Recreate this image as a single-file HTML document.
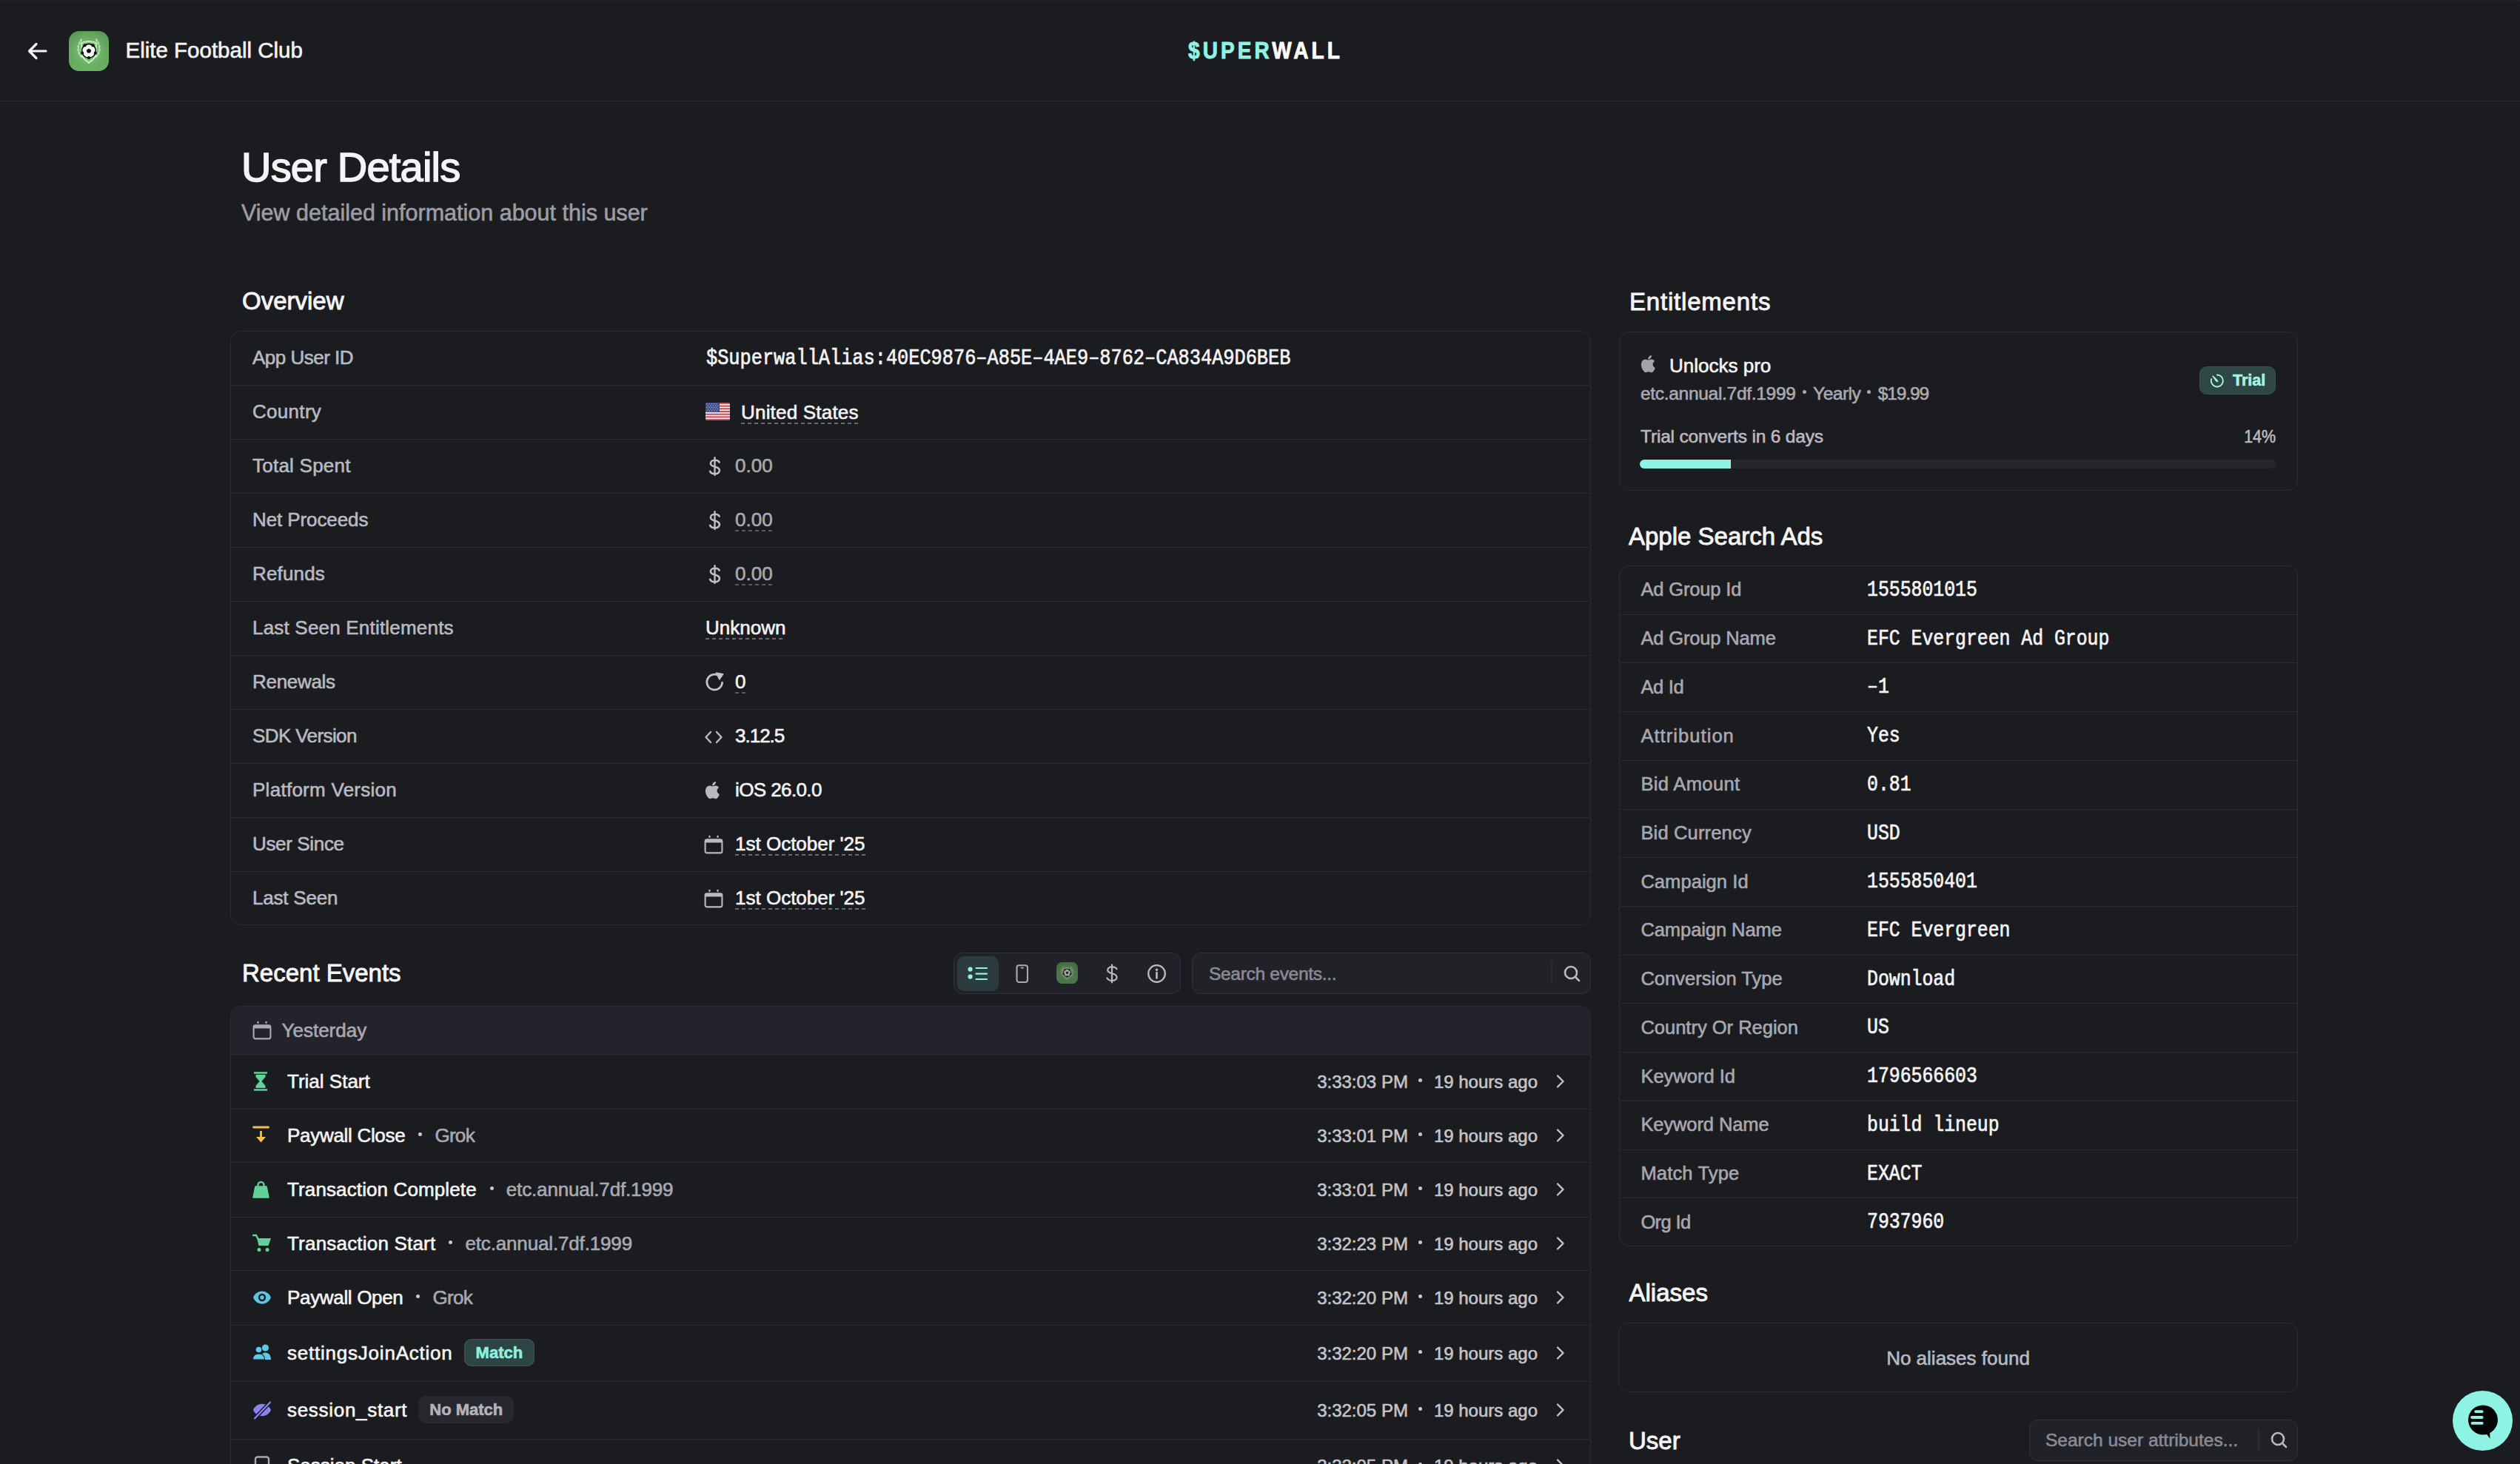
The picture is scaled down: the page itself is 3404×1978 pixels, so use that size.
<!DOCTYPE html><html><head><meta charset="utf-8"><title>User Details</title><style>
*{margin:0;padding:0;box-sizing:border-box}
html,body{width:3404px;height:1978px;overflow:hidden;background:#1b1c20;font-family:"Liberation Sans",sans-serif;}
.t{position:absolute;white-space:nowrap;line-height:1;-webkit-text-stroke:0.6px currentColor;}
.h{-webkit-text-stroke:0.9px currentColor;}
.h2{-webkit-text-stroke:1.5px currentColor;}
.m{font-family:"Liberation Mono",monospace;}
.r{position:absolute;}
svg{position:absolute;overflow:visible}
</style></head><body>
<div class="r" style="left:0px;top:0px;width:3404px;height:3px;background:linear-gradient(#23242a,#1b1c20)"></div>
<div class="r" style="left:0px;top:136px;width:3404px;height:1px;background:#2a2b30"></div>
<svg style="left:36px;top:56px" width="30" height="26" viewBox="0 0 30 26"><path d="M26 13H4M13 3.5L3.5 13L13 22.5" fill="none" stroke="#f4f4f6" stroke-width="3.2" stroke-linecap="round" stroke-linejoin="round"/></svg>
<svg style="left:93px;top:42px" width="54" height="54" viewBox="0 0 54 54"><defs><linearGradient id="gi93" x1="0" y1="0" x2="0" y2="1"><stop offset="0" stop-color="#5b9855"/><stop offset="0.5" stop-color="#64a85c"/><stop offset="1" stop-color="#68b05f"/></linearGradient><radialGradient id="gi93r" cx="0.5" cy="0.45" r="0.5"><stop offset="0" stop-color="#9bd893" stop-opacity="0.55"/><stop offset="1" stop-color="#9bd893" stop-opacity="0"/></radialGradient></defs><rect x="0" y="0" width="54" height="54" rx="14" fill="url(#gi93)"/><rect x="0" y="0" width="54" height="54" rx="14" fill="url(#gi93r)"/><path d="M17 16 Q27 11.5 37 16 L37 28 Q37 37 27 43 Q17 37 17 28 Z" fill="#b4e6ac" fill-opacity="0.3" stroke="#d2f7ca" stroke-width="1.5"/><ellipse cx="16.5" cy="12.5" rx="1.4" ry="2.3" transform="rotate(20 16.5 12.5)" fill="#c6efbf" fill-opacity="0.8"/><ellipse cx="37.5" cy="12.5" rx="1.4" ry="2.3" transform="rotate(-20 37.5 12.5)" fill="#c6efbf" fill-opacity="0.8"/><ellipse cx="14.2" cy="16.5" rx="1.4" ry="2.3" transform="rotate(10 14.2 16.5)" fill="#c6efbf" fill-opacity="0.8"/><ellipse cx="39.8" cy="16.5" rx="1.4" ry="2.3" transform="rotate(-10 39.8 16.5)" fill="#c6efbf" fill-opacity="0.8"/><ellipse cx="12.8" cy="21" rx="1.4" ry="2.3" transform="rotate(0 12.8 21)" fill="#c6efbf" fill-opacity="0.8"/><ellipse cx="41.2" cy="21" rx="1.4" ry="2.3" transform="rotate(0 41.2 21)" fill="#c6efbf" fill-opacity="0.8"/><ellipse cx="12.8" cy="25.5" rx="1.4" ry="2.3" transform="rotate(-10 12.8 25.5)" fill="#c6efbf" fill-opacity="0.8"/><ellipse cx="41.2" cy="25.5" rx="1.4" ry="2.3" transform="rotate(10 41.2 25.5)" fill="#c6efbf" fill-opacity="0.8"/><ellipse cx="14" cy="30" rx="1.4" ry="2.3" transform="rotate(-25 14 30)" fill="#c6efbf" fill-opacity="0.8"/><ellipse cx="40" cy="30" rx="1.4" ry="2.3" transform="rotate(25 40 30)" fill="#c6efbf" fill-opacity="0.8"/><ellipse cx="16.5" cy="34" rx="1.4" ry="2.3" transform="rotate(-40 16.5 34)" fill="#c6efbf" fill-opacity="0.8"/><ellipse cx="37.5" cy="34" rx="1.4" ry="2.3" transform="rotate(40 37.5 34)" fill="#c6efbf" fill-opacity="0.8"/><circle cx="27" cy="26.8" r="10.2" fill="#0d0d0d"/><circle cx="27" cy="26.8" r="8.6" fill="#f4f4f4"/><polygon points="27.00,23.40 23.77,25.75 25.00,29.55 29.00,29.55 30.23,25.75" fill="#0d0d0d"/><circle cx="21.53" cy="19.28" r="2.1" fill="#0d0d0d"/><circle cx="18.16" cy="29.67" r="2.1" fill="#0d0d0d"/><circle cx="27.00" cy="36.10" r="2.1" fill="#0d0d0d"/><circle cx="35.84" cy="29.67" r="2.1" fill="#0d0d0d"/><circle cx="32.47" cy="19.28" r="2.1" fill="#0d0d0d"/></svg>
<div class="t  " style="left:169.5px;top:53.03px;font-size:29.5px;color:#f4f4f6;">Elite Football Club</div>
<div class="t" style="left:1605px;top:52.76px;font-size:31px;font-weight:700;letter-spacing:4.6px;transform:scaleX(0.9);transform-origin:0 0;-webkit-text-stroke:0.9px currentColor"><span style="color:#8ff3e3">$UPER</span><span style="color:#ffffff">WALL</span></div>
<div class="t  h2" style="left:326px;top:197.90px;font-size:56px;color:#f4f4f6;letter-spacing:-0.8px;">User Details</div>
<div class="t  " style="left:326px;top:272.18px;font-size:30.5px;color:#9d9da6;">View detailed information about this user</div>
<div class="t  h" style="left:327px;top:390.07px;font-size:33px;color:#f4f4f6;">Overview</div>
<div class="r" style="left:311px;top:447px;width:1838px;height:803px;border:1.5px solid #2c2d33;border-radius:14px;"></div>
<div class="t  " style="left:341px;top:470.49px;font-size:26px;color:#b9b9c1;letter-spacing:-0.5px;">App User ID</div>
<div class="r" style="left:312px;top:520px;width:1836px;height:1px;background:#2b2c32"></div>
<div class="t  " style="left:341px;top:543.49px;font-size:26px;color:#b9b9c1;letter-spacing:0.3px;">Country</div>
<div class="r" style="left:312px;top:593px;width:1836px;height:1px;background:#2b2c32"></div>
<div class="t  " style="left:341px;top:616.49px;font-size:26px;color:#b9b9c1;letter-spacing:0.24px;">Total Spent</div>
<div class="r" style="left:312px;top:666px;width:1836px;height:1px;background:#2b2c32"></div>
<div class="t  " style="left:341px;top:689.49px;font-size:26px;color:#b9b9c1;letter-spacing:-0.1px;">Net Proceeds</div>
<div class="r" style="left:312px;top:739px;width:1836px;height:1px;background:#2b2c32"></div>
<div class="t  " style="left:341px;top:762.49px;font-size:26px;color:#b9b9c1;letter-spacing:0.17px;">Refunds</div>
<div class="r" style="left:312px;top:812px;width:1836px;height:1px;background:#2b2c32"></div>
<div class="t  " style="left:341px;top:835.49px;font-size:26px;color:#b9b9c1;letter-spacing:0.2px;">Last Seen Entitlements</div>
<div class="r" style="left:312px;top:885px;width:1836px;height:1px;background:#2b2c32"></div>
<div class="t  " style="left:341px;top:908.49px;font-size:26px;color:#b9b9c1;letter-spacing:-0.3px;">Renewals</div>
<div class="r" style="left:312px;top:958px;width:1836px;height:1px;background:#2b2c32"></div>
<div class="t  " style="left:341px;top:981.49px;font-size:26px;color:#b9b9c1;letter-spacing:-0.6px;">SDK Version</div>
<div class="r" style="left:312px;top:1031px;width:1836px;height:1px;background:#2b2c32"></div>
<div class="t  " style="left:341px;top:1054.49px;font-size:26px;color:#b9b9c1;letter-spacing:0.27px;">Platform Version</div>
<div class="r" style="left:312px;top:1104px;width:1836px;height:1px;background:#2b2c32"></div>
<div class="t  " style="left:341px;top:1127.49px;font-size:26px;color:#b9b9c1;letter-spacing:-0.35px;">User Since</div>
<div class="r" style="left:312px;top:1177px;width:1836px;height:1px;background:#2b2c32"></div>
<div class="t  " style="left:341px;top:1200.49px;font-size:26px;color:#b9b9c1;letter-spacing:-0.2px;">Last Seen</div>
<div class="t m " style="left:954px;top:473.12px;font-size:25.3px;color:#f4f4f6;transform:scaleY(1.18);transform-origin:0 76%;">$SuperwallAlias:40EC9876&#8211;A85E&#8211;4AE9&#8211;8762&#8211;CA834A9D6BEB</div>
<svg style="left:953px;top:544px" width="33" height="24" viewBox="0 0 33 24"><defs><clipPath id="fc"><rect width="33" height="24" rx="3.5"/></clipPath></defs><g clip-path="url(#fc)"><rect width="33" height="24" fill="#f0eeee"/><rect y="0.00" width="33" height="1.85" fill="#c1454d"/><rect y="3.69" width="33" height="1.85" fill="#c1454d"/><rect y="7.38" width="33" height="1.85" fill="#c1454d"/><rect y="11.08" width="33" height="1.85" fill="#c1454d"/><rect y="14.77" width="33" height="1.85" fill="#c1454d"/><rect y="18.46" width="33" height="1.85" fill="#c1454d"/><rect y="22.15" width="33" height="1.85" fill="#c1454d"/><rect width="19" height="12.9" fill="#3f4f8f"/><circle cx="2.0" cy="1.8" r="0.55" fill="#dfe3f5"/><circle cx="5.2" cy="1.8" r="0.55" fill="#dfe3f5"/><circle cx="8.4" cy="1.8" r="0.55" fill="#dfe3f5"/><circle cx="11.6" cy="1.8" r="0.55" fill="#dfe3f5"/><circle cx="14.8" cy="1.8" r="0.55" fill="#dfe3f5"/><circle cx="3.6" cy="4.1" r="0.55" fill="#dfe3f5"/><circle cx="6.8" cy="4.1" r="0.55" fill="#dfe3f5"/><circle cx="10.0" cy="4.1" r="0.55" fill="#dfe3f5"/><circle cx="13.2" cy="4.1" r="0.55" fill="#dfe3f5"/><circle cx="16.4" cy="4.1" r="0.55" fill="#dfe3f5"/><circle cx="2.0" cy="6.4" r="0.55" fill="#dfe3f5"/><circle cx="5.2" cy="6.4" r="0.55" fill="#dfe3f5"/><circle cx="8.4" cy="6.4" r="0.55" fill="#dfe3f5"/><circle cx="11.6" cy="6.4" r="0.55" fill="#dfe3f5"/><circle cx="14.8" cy="6.4" r="0.55" fill="#dfe3f5"/><circle cx="3.6" cy="8.7" r="0.55" fill="#dfe3f5"/><circle cx="6.8" cy="8.7" r="0.55" fill="#dfe3f5"/><circle cx="10.0" cy="8.7" r="0.55" fill="#dfe3f5"/><circle cx="13.2" cy="8.7" r="0.55" fill="#dfe3f5"/><circle cx="16.4" cy="8.7" r="0.55" fill="#dfe3f5"/><circle cx="2.0" cy="11.0" r="0.55" fill="#dfe3f5"/><circle cx="5.2" cy="11.0" r="0.55" fill="#dfe3f5"/><circle cx="8.4" cy="11.0" r="0.55" fill="#dfe3f5"/><circle cx="11.6" cy="11.0" r="0.55" fill="#dfe3f5"/><circle cx="14.8" cy="11.0" r="0.55" fill="#dfe3f5"/></g></svg>
<div class="t  " style="left:1001px;top:543.99px;font-size:26px;color:#f4f4f6;"><span style="background:linear-gradient(90deg,#6a6a72 0 5.5px,transparent 5.5px 9px) repeat-x 0 100%/9px 2px;padding-bottom:1px;letter-spacing:0.2px">United States</span></div>
<svg style="left:956px;top:617px" width="19" height="28" viewBox="0 0 19 28"><path d="M9.5 1.2v23.8" stroke="#c0c0c8" stroke-width="2.3" stroke-linecap="round"/><path d="M15.6 7.6C14.8 5.6 12.6 4.7 9.7 4.7C6.2 4.7 3.9 6.6 3.9 9.2C3.9 15 15.9 12.2 15.9 18.6C15.9 21.4 13.4 23.3 9.6 23.3C6.4 23.3 4 22 3.1 19.8" fill="none" stroke="#c0c0c8" stroke-width="2.6" stroke-linecap="round"/></svg>
<div class="t  " style="left:993px;top:616.49px;font-size:26px;color:#a9a9b1;">0.00</div>
<svg style="left:956px;top:690px" width="19" height="28" viewBox="0 0 19 28"><path d="M9.5 1.2v23.8" stroke="#c0c0c8" stroke-width="2.3" stroke-linecap="round"/><path d="M15.6 7.6C14.8 5.6 12.6 4.7 9.7 4.7C6.2 4.7 3.9 6.6 3.9 9.2C3.9 15 15.9 12.2 15.9 18.6C15.9 21.4 13.4 23.3 9.6 23.3C6.4 23.3 4 22 3.1 19.8" fill="none" stroke="#c0c0c8" stroke-width="2.6" stroke-linecap="round"/></svg>
<div class="t  " style="left:993px;top:689.49px;font-size:26px;color:#a9a9b1;"><span style="background:linear-gradient(90deg,#5a5a62 0 5.5px,transparent 5.5px 9px) repeat-x 0 100%/9px 2px;padding-bottom:1px">0.00</span></div>
<svg style="left:956px;top:763px" width="19" height="28" viewBox="0 0 19 28"><path d="M9.5 1.2v23.8" stroke="#c0c0c8" stroke-width="2.3" stroke-linecap="round"/><path d="M15.6 7.6C14.8 5.6 12.6 4.7 9.7 4.7C6.2 4.7 3.9 6.6 3.9 9.2C3.9 15 15.9 12.2 15.9 18.6C15.9 21.4 13.4 23.3 9.6 23.3C6.4 23.3 4 22 3.1 19.8" fill="none" stroke="#c0c0c8" stroke-width="2.6" stroke-linecap="round"/></svg>
<div class="t  " style="left:993px;top:762.49px;font-size:26px;color:#a9a9b1;"><span style="background:linear-gradient(90deg,#5a5a62 0 5.5px,transparent 5.5px 9px) repeat-x 0 100%/9px 2px;padding-bottom:1px">0.00</span></div>
<div class="t  " style="left:953px;top:835.49px;font-size:26px;color:#f4f4f6;"><span style="background:linear-gradient(90deg,#6a6a72 0 5.5px,transparent 5.5px 9px) repeat-x 0 100%/9px 2px;padding-bottom:1px">Unknown</span></div>
<svg style="left:951px;top:906px" width="30" height="30" viewBox="0 0 30 30"><path d="M24.6 16.2A10.4 10.4 0 1 1 19.2 6.4" fill="none" stroke="#c4c4cb" stroke-width="2.7" stroke-linecap="round"/><path d="M16.2 2.8L26.2 4.6L20.8 12.6Z" fill="#c4c4cb" stroke="#c4c4cb" stroke-width="1" stroke-linejoin="round"/></svg>
<div class="t  " style="left:993px;top:908.49px;font-size:26px;color:#f4f4f6;"><span style="background:linear-gradient(90deg,#5a5a62 0 5.5px,transparent 5.5px 9px) repeat-x 0 100%/9px 2px;padding-bottom:1px">0</span></div>
<svg style="left:951px;top:985px" width="26" height="22" viewBox="0 0 26 22"><path d="M9 4L2.5 11L9 18M17 4L23.5 11L17 18" fill="none" stroke="#b9b9c1" stroke-width="2.4" stroke-linecap="round" stroke-linejoin="round"/></svg>
<div class="t  " style="left:993px;top:981.49px;font-size:26px;color:#f4f4f6;letter-spacing:-1.0px;">3.12.5</div>
<svg style="left:951px;top:1055px" width="24" height="26" viewBox="0 0 24 26"><path d="M17.6 13.3c0-2.9 2.4-4.3 2.5-4.4-1.4-2-3.5-2.3-4.2-2.3-1.8-.2-3.5 1-4.4 1-.9 0-2.3-1-3.8-1-2 0-3.8 1.2-4.8 2.9-2.1 3.6-.5 8.9 1.5 11.8 1 1.4 2.2 3 3.7 3 1.5-.1 2-1 3.8-1s2.3 1 3.8 1c1.6 0 2.6-1.4 3.6-2.9 1.1-1.6 1.6-3.2 1.6-3.3-.1 0-3.3-1.2-3.3-4.8zM14.7 4.7c.8-1 1.4-2.3 1.2-3.7-1.2.1-2.6.8-3.5 1.8-.8.9-1.4 2.3-1.3 3.6 1.4.1 2.7-.7 3.6-1.7z" fill="#b9b9c1"/></svg>
<div class="t  " style="left:993px;top:1054.49px;font-size:26px;color:#f4f4f6;letter-spacing:-0.6px;">iOS 26.0.0</div>
<svg style="left:951px;top:1128px" width="26" height="26" viewBox="0 0 26 26"><rect x="1.6" y="6.4" width="22.8" height="18" rx="2.4" fill="none" stroke="#b9b9c1" stroke-width="2.1"/><rect x="1.6" y="6.4" width="22.8" height="4" rx="1.2" fill="#b9b9c1"/><rect x="6.3" y="0.8" width="2.3" height="3.3" rx="1.15" fill="#b9b9c1"/><rect x="17.4" y="0.8" width="2.3" height="3.3" rx="1.15" fill="#b9b9c1"/></svg>
<div class="t  " style="left:993px;top:1127.49px;font-size:26px;color:#f4f4f6;"><span style="background:linear-gradient(90deg,#6a6a72 0 5.5px,transparent 5.5px 9px) repeat-x 0 100%/9px 2px;padding-bottom:1px">1st October '25</span></div>
<svg style="left:951px;top:1201px" width="26" height="26" viewBox="0 0 26 26"><rect x="1.6" y="6.4" width="22.8" height="18" rx="2.4" fill="none" stroke="#b9b9c1" stroke-width="2.1"/><rect x="1.6" y="6.4" width="22.8" height="4" rx="1.2" fill="#b9b9c1"/><rect x="6.3" y="0.8" width="2.3" height="3.3" rx="1.15" fill="#b9b9c1"/><rect x="17.4" y="0.8" width="2.3" height="3.3" rx="1.15" fill="#b9b9c1"/></svg>
<div class="t  " style="left:993px;top:1200.49px;font-size:26px;color:#f4f4f6;"><span style="background:linear-gradient(90deg,#6a6a72 0 5.5px,transparent 5.5px 9px) repeat-x 0 100%/9px 2px;padding-bottom:1px">1st October '25</span></div>
<div class="t  h" style="left:327px;top:1298.07px;font-size:33px;color:#f4f4f6;">Recent Events</div>
<div class="r" style="left:1288px;top:1287px;width:307px;height:56px;background:#212228;border:1.5px solid #32333a;border-radius:12px;"></div>
<div class="r" style="left:1293px;top:1292px;width:56px;height:47px;background:#2b3b3e;border-radius:9px;"></div>
<svg style="left:1304px;top:1303px" width="32" height="26" viewBox="0 0 32 26"><circle cx="6.6" cy="6.6" r="3.1" fill="#8ff3e3"/><circle cx="6.6" cy="16.6" r="3.1" fill="#8ff3e3"/><path d="M14.5 5h14.5M14.5 12.6h14.5M14.5 20h14.5" stroke="#8ff3e3" stroke-width="2.2" stroke-linecap="round"/></svg>
<svg style="left:1372px;top:1303px" width="18" height="26" viewBox="0 0 18 26"><rect x="1.5" y="1.2" width="14.5" height="22.8" rx="3" fill="none" stroke="#a9a9b1" stroke-width="2.1"/><path d="M7.3 4.6h3" stroke="#a9a9b1" stroke-width="1.6" stroke-linecap="round"/></svg>
<svg style="left:1427px;top:1300px" width="29" height="29" viewBox="0 0 54 54" opacity="0.6"><defs><linearGradient id="gi1427" x1="0" y1="0" x2="0" y2="1"><stop offset="0" stop-color="#5b9855"/><stop offset="0.5" stop-color="#64a85c"/><stop offset="1" stop-color="#68b05f"/></linearGradient><radialGradient id="gi1427r" cx="0.5" cy="0.45" r="0.5"><stop offset="0" stop-color="#9bd893" stop-opacity="0.55"/><stop offset="1" stop-color="#9bd893" stop-opacity="0"/></radialGradient></defs><rect x="0" y="0" width="54" height="54" rx="14" fill="url(#gi1427)"/><rect x="0" y="0" width="54" height="54" rx="14" fill="url(#gi1427r)"/><path d="M17 16 Q27 11.5 37 16 L37 28 Q37 37 27 43 Q17 37 17 28 Z" fill="#b4e6ac" fill-opacity="0.3" stroke="#d2f7ca" stroke-width="1.5"/><ellipse cx="16.5" cy="12.5" rx="1.4" ry="2.3" transform="rotate(20 16.5 12.5)" fill="#c6efbf" fill-opacity="0.8"/><ellipse cx="37.5" cy="12.5" rx="1.4" ry="2.3" transform="rotate(-20 37.5 12.5)" fill="#c6efbf" fill-opacity="0.8"/><ellipse cx="14.2" cy="16.5" rx="1.4" ry="2.3" transform="rotate(10 14.2 16.5)" fill="#c6efbf" fill-opacity="0.8"/><ellipse cx="39.8" cy="16.5" rx="1.4" ry="2.3" transform="rotate(-10 39.8 16.5)" fill="#c6efbf" fill-opacity="0.8"/><ellipse cx="12.8" cy="21" rx="1.4" ry="2.3" transform="rotate(0 12.8 21)" fill="#c6efbf" fill-opacity="0.8"/><ellipse cx="41.2" cy="21" rx="1.4" ry="2.3" transform="rotate(0 41.2 21)" fill="#c6efbf" fill-opacity="0.8"/><ellipse cx="12.8" cy="25.5" rx="1.4" ry="2.3" transform="rotate(-10 12.8 25.5)" fill="#c6efbf" fill-opacity="0.8"/><ellipse cx="41.2" cy="25.5" rx="1.4" ry="2.3" transform="rotate(10 41.2 25.5)" fill="#c6efbf" fill-opacity="0.8"/><ellipse cx="14" cy="30" rx="1.4" ry="2.3" transform="rotate(-25 14 30)" fill="#c6efbf" fill-opacity="0.8"/><ellipse cx="40" cy="30" rx="1.4" ry="2.3" transform="rotate(25 40 30)" fill="#c6efbf" fill-opacity="0.8"/><ellipse cx="16.5" cy="34" rx="1.4" ry="2.3" transform="rotate(-40 16.5 34)" fill="#c6efbf" fill-opacity="0.8"/><ellipse cx="37.5" cy="34" rx="1.4" ry="2.3" transform="rotate(40 37.5 34)" fill="#c6efbf" fill-opacity="0.8"/><circle cx="27" cy="26.8" r="10.2" fill="#0d0d0d"/><circle cx="27" cy="26.8" r="8.6" fill="#f4f4f4"/><polygon points="27.00,23.40 23.77,25.75 25.00,29.55 29.00,29.55 30.23,25.75" fill="#0d0d0d"/><circle cx="21.53" cy="19.28" r="2.1" fill="#0d0d0d"/><circle cx="18.16" cy="29.67" r="2.1" fill="#0d0d0d"/><circle cx="27.00" cy="36.10" r="2.1" fill="#0d0d0d"/><circle cx="35.84" cy="29.67" r="2.1" fill="#0d0d0d"/><circle cx="32.47" cy="19.28" r="2.1" fill="#0d0d0d"/></svg>
<svg style="left:1492px;top:1302px" width="20" height="27" viewBox="0 0 20 27"><path d="M10 1.5v24" stroke="#b9b9c1" stroke-width="2.2" stroke-linecap="round"/><path d="M16.5 7.2C15.6 5.3 13.3 4.3 10.3 4.3C6.6 4.3 4.2 6.2 4.2 8.8C4.2 14.6 16.6 11.8 16.6 18.2C16.6 21 14 22.9 10.1 22.9C6.8 22.9 4.4 21.6 3.4 19.4" fill="none" stroke="#b9b9c1" stroke-width="2.2" stroke-linecap="round"/></svg>
<svg style="left:1549px;top:1302px" width="28" height="28" viewBox="0 0 28 28"><circle cx="13.5" cy="13.5" r="11.3" fill="none" stroke="#b9b9c1" stroke-width="2.3"/><circle cx="13.5" cy="8.3" r="1.7" fill="#b9b9c1"/><path d="M13.5 12v7.5" stroke="#b9b9c1" stroke-width="2.7" stroke-linecap="round"/></svg>
<div class="r" style="left:1610px;top:1287px;width:539px;height:56px;background:#212228;border:1.5px solid #32333a;border-radius:12px;"></div>
<div class="t  " style="left:1633px;top:1304.26px;font-size:24.5px;color:#8a8a93;letter-spacing:-0.3px;">Search events...</div>
<div class="r" style="left:2095px;top:1300px;width:2px;height:30px;background:#2c2d33"></div>
<svg style="left:2112px;top:1304px" width="22" height="22" viewBox="0 0 22 22"><circle cx="10" cy="10" r="8" fill="none" stroke="#b9b9c1" stroke-width="2.6"/><path d="M16 16l5 5" stroke="#b9b9c1" stroke-width="2.6" stroke-linecap="round"/></svg>
<div class="r" style="left:311px;top:1359px;width:1838px;height:741px;border:1.5px solid #2c2d33;border-radius:14px;"></div>
<div class="r" style="left:312px;top:1360px;width:1836px;height:64px;background:#23242b;border-radius:13px 13px 0 0;"></div>
<div class="r" style="left:312px;top:1424px;width:1836px;height:1px;background:#2b2c32"></div>
<svg style="left:341px;top:1379px" width="26" height="26" viewBox="0 0 26 26"><rect x="1.6" y="6.4" width="22.8" height="18" rx="2.4" fill="none" stroke="#a9a9b1" stroke-width="2.1"/><rect x="1.6" y="6.4" width="22.8" height="4" rx="1.2" fill="#a9a9b1"/><rect x="6.3" y="0.8" width="2.3" height="3.3" rx="1.15" fill="#a9a9b1"/><rect x="17.4" y="0.8" width="2.3" height="3.3" rx="1.15" fill="#a9a9b1"/></svg>
<div class="t  " style="left:380.5px;top:1378.99px;font-size:26px;color:#a9a9b1;">Yesterday</div>
<svg style="left:341px;top:1448.0px" width="26" height="26" viewBox="0 0 26 26"><path d="M2 1.5h18M2 24.5h18" stroke="#62d09b" stroke-width="2.6"/><path d="M4.5 4h13v3l-5 6 5 6v3h-13v-3l5-6-5-6z" fill="#62d09b"/></svg>
<div class="t  " style="left:388px;top:1447.99px;font-size:26px;color:#f4f4f6;"><span style="letter-spacing:0px">Trial Start</span></div>
<div class="t" style="right:1327px;top:1449.68px;font-size:24px;color:#c4c4cb">3:33:03 PM<span style="display:inline-block;width:5px;height:5px;border-radius:50%;background:#c9c9d0;margin:0 15.5px 0 14.5px;vertical-align:0.3em"></span>19 hours ago</div>
<svg style="left:2101px;top:1451.0px" width="14" height="20" viewBox="0 0 14 20"><path d="M3 2.5L10.5 10L3 17.5" fill="none" stroke="#c4c4cb" stroke-width="2.4" stroke-linecap="round" stroke-linejoin="round"/></svg>
<div class="r" style="left:312px;top:1498px;width:1836px;height:1px;background:#2b2c32"></div>
<svg style="left:341px;top:1521.0px" width="26" height="26" viewBox="0 0 26 26"><path d="M1.5 2h20" stroke="#f3bf4b" stroke-width="2.8" stroke-linecap="round"/><path d="M11.5 7v14" stroke="#f3bf4b" stroke-width="2.8"/><path d="M5 15l6.5 7.5L18 15z" fill="#f3bf4b"/></svg>
<div class="t  " style="left:388px;top:1520.99px;font-size:26px;color:#f4f4f6;"><span style="letter-spacing:-0.3px">Paywall Close</span><span style="display:inline-block;width:5px;height:5px;border-radius:50%;background:#c9c9d0;margin:0 17px 0 18px;vertical-align:0.3em"></span><span style="color:#a9a9b1;letter-spacing:-0.7px">Grok</span></div>
<div class="t" style="right:1327px;top:1522.68px;font-size:24px;color:#c4c4cb">3:33:01 PM<span style="display:inline-block;width:5px;height:5px;border-radius:50%;background:#c9c9d0;margin:0 15.5px 0 14.5px;vertical-align:0.3em"></span>19 hours ago</div>
<svg style="left:2101px;top:1524.0px" width="14" height="20" viewBox="0 0 14 20"><path d="M3 2.5L10.5 10L3 17.5" fill="none" stroke="#c4c4cb" stroke-width="2.4" stroke-linecap="round" stroke-linejoin="round"/></svg>
<div class="r" style="left:312px;top:1570px;width:1836px;height:1px;background:#2b2c32"></div>
<svg style="left:341px;top:1594.0px" width="26" height="26" viewBox="0 0 26 26"><path d="M7.5 9V7a4 4 0 0 1 8 0v2" fill="none" stroke="#62d09b" stroke-width="2.4"/><path d="M4 9h15l3 15H1z" fill="#62d09b" stroke="#62d09b" stroke-width="1.5" stroke-linejoin="round"/></svg>
<div class="t  " style="left:388px;top:1593.99px;font-size:26px;color:#f4f4f6;"><span style="letter-spacing:0.12px">Transaction Complete</span><span style="display:inline-block;width:5px;height:5px;border-radius:50%;background:#c9c9d0;margin:0 17px 0 18px;vertical-align:0.3em"></span><span style="color:#a9a9b1;letter-spacing:-0.15px">etc.annual.7df.1999</span></div>
<div class="t" style="right:1327px;top:1595.68px;font-size:24px;color:#c4c4cb">3:33:01 PM<span style="display:inline-block;width:5px;height:5px;border-radius:50%;background:#c9c9d0;margin:0 15.5px 0 14.5px;vertical-align:0.3em"></span>19 hours ago</div>
<svg style="left:2101px;top:1597.0px" width="14" height="20" viewBox="0 0 14 20"><path d="M3 2.5L10.5 10L3 17.5" fill="none" stroke="#c4c4cb" stroke-width="2.4" stroke-linecap="round" stroke-linejoin="round"/></svg>
<div class="r" style="left:312px;top:1644px;width:1836px;height:1px;background:#2b2c32"></div>
<svg style="left:341px;top:1667.0px" width="26" height="26" viewBox="0 0 26 26"><path d="M1 2h4l2 4" fill="none" stroke="#62d09b" stroke-width="2.4" stroke-linecap="round"/><path d="M6 6h19l-3.5 10H8.5z" fill="#62d09b"/><circle cx="9" cy="21.5" r="2.5" fill="#62d09b"/><circle cx="20" cy="21.5" r="2.5" fill="#62d09b"/></svg>
<div class="t  " style="left:388px;top:1666.99px;font-size:26px;color:#f4f4f6;"><span style="letter-spacing:0.2px">Transaction Start</span><span style="display:inline-block;width:5px;height:5px;border-radius:50%;background:#c9c9d0;margin:0 17px 0 18px;vertical-align:0.3em"></span><span style="color:#a9a9b1;letter-spacing:-0.15px">etc.annual.7df.1999</span></div>
<div class="t" style="right:1327px;top:1668.68px;font-size:24px;color:#c4c4cb">3:32:23 PM<span style="display:inline-block;width:5px;height:5px;border-radius:50%;background:#c9c9d0;margin:0 15.5px 0 14.5px;vertical-align:0.3em"></span>19 hours ago</div>
<svg style="left:2101px;top:1670.0px" width="14" height="20" viewBox="0 0 14 20"><path d="M3 2.5L10.5 10L3 17.5" fill="none" stroke="#c4c4cb" stroke-width="2.4" stroke-linecap="round" stroke-linejoin="round"/></svg>
<div class="r" style="left:312px;top:1716px;width:1836px;height:1px;background:#2b2c32"></div>
<svg style="left:341px;top:1740.0px" width="26" height="26" viewBox="0 0 26 26"><path d="M1 13C5.5 1.5 20.5 1.5 25 13C20.5 24.5 5.5 24.5 1 13z" fill="#5fc3e3"/><circle cx="13" cy="13" r="5.2" fill="#1b1c20"/><circle cx="13" cy="13" r="2.7" fill="#5fc3e3"/></svg>
<div class="t  " style="left:388px;top:1739.99px;font-size:26px;color:#f4f4f6;"><span style="letter-spacing:-0.33px">Paywall Open</span><span style="display:inline-block;width:5px;height:5px;border-radius:50%;background:#c9c9d0;margin:0 17px 0 18px;vertical-align:0.3em"></span><span style="color:#a9a9b1;letter-spacing:-0.7px">Grok</span></div>
<div class="t" style="right:1327px;top:1741.68px;font-size:24px;color:#c4c4cb">3:32:20 PM<span style="display:inline-block;width:5px;height:5px;border-radius:50%;background:#c9c9d0;margin:0 15.5px 0 14.5px;vertical-align:0.3em"></span>19 hours ago</div>
<svg style="left:2101px;top:1743.0px" width="14" height="20" viewBox="0 0 14 20"><path d="M3 2.5L10.5 10L3 17.5" fill="none" stroke="#c4c4cb" stroke-width="2.4" stroke-linecap="round" stroke-linejoin="round"/></svg>
<div class="r" style="left:312px;top:1790px;width:1836px;height:1px;background:#2b2c32"></div>
<svg style="left:341px;top:1815.0px" width="26" height="26" viewBox="0 0 26 26"><circle cx="17.5" cy="6" r="4.6" fill="#62c6e6"/><path d="M10.5 22c0-6 2.5-9.5 7-9.5s7.5 3.5 7.5 9.5z" fill="#62c6e6"/><circle cx="8.5" cy="8.5" r="4.4" fill="#1b1c20"/><circle cx="8.5" cy="8.5" r="3.8" fill="#62c6e6"/><path d="M0.5 22c0-5 3-8 8-8s8 3 8 8z" fill="#62c6e6" stroke="#1b1c20" stroke-width="1.2"/></svg>
<div class="t  " style="left:388px;top:1814.99px;font-size:26px;color:#f4f4f6;"><span style="letter-spacing:0.78px">settingsJoinAction</span><span style="display:inline-block;margin-left:15px;padding:0 16px;height:37px;line-height:37px;border-radius:10px;background:#2c4443;box-shadow:inset 0 0 0 1.5px #385250;color:#8ff0de;font-weight:700;font-size:22px;vertical-align:middle;margin-top:-14px;margin-bottom:-14px;position:relative;top:-3px">Match</span></div>
<div class="t" style="right:1327px;top:1816.68px;font-size:24px;color:#c4c4cb">3:32:20 PM<span style="display:inline-block;width:5px;height:5px;border-radius:50%;background:#c9c9d0;margin:0 15.5px 0 14.5px;vertical-align:0.3em"></span>19 hours ago</div>
<svg style="left:2101px;top:1818.0px" width="14" height="20" viewBox="0 0 14 20"><path d="M3 2.5L10.5 10L3 17.5" fill="none" stroke="#c4c4cb" stroke-width="2.4" stroke-linecap="round" stroke-linejoin="round"/></svg>
<div class="r" style="left:312px;top:1866px;width:1836px;height:1px;background:#2b2c32"></div>
<svg style="left:341px;top:1892.0px" width="26" height="26" viewBox="0 0 26 26"><path d="M1 13C5.5 2 20.5 2 25 13C20.5 24 5.5 24 1 13z" fill="#8a84f2"/><path d="M3 24.5L24 2.5" stroke="#1b1c20" stroke-width="5"/><path d="M3 24.5L24 2.5" stroke="#8a84f2" stroke-width="2.2" stroke-linecap="round"/></svg>
<div class="t  " style="left:388px;top:1891.99px;font-size:26px;color:#f4f4f6;"><span style="letter-spacing:0.7px">session_start</span><span style="display:inline-block;margin-left:15px;padding:0 15px;height:37px;line-height:37px;border-radius:10px;background:#27282d;color:#b3b3bb;font-weight:700;font-size:22px;vertical-align:middle;margin-top:-14px;margin-bottom:-14px;position:relative;top:-3px">No Match</span></div>
<div class="t" style="right:1327px;top:1893.68px;font-size:24px;color:#c4c4cb">3:32:05 PM<span style="display:inline-block;width:5px;height:5px;border-radius:50%;background:#c9c9d0;margin:0 15.5px 0 14.5px;vertical-align:0.3em"></span>19 hours ago</div>
<svg style="left:2101px;top:1895.0px" width="14" height="20" viewBox="0 0 14 20"><path d="M3 2.5L10.5 10L3 17.5" fill="none" stroke="#c4c4cb" stroke-width="2.4" stroke-linecap="round" stroke-linejoin="round"/></svg>
<div class="r" style="left:312px;top:1944px;width:1836px;height:1px;background:#2b2c32"></div>
<svg style="left:341px;top:1967.0px" width="26" height="26" viewBox="0 0 26 26"><rect x="4" y="1.5" width="18" height="26" rx="3" fill="none" stroke="#a9a9b1" stroke-width="2.4"/></svg>
<div class="t  " style="left:388px;top:1966.99px;font-size:26px;color:#f4f4f6;"><span style="letter-spacing:0px">Session Start</span></div>
<div class="t" style="right:1327px;top:1968.68px;font-size:24px;color:#c4c4cb">3:32:05 PM<span style="display:inline-block;width:5px;height:5px;border-radius:50%;background:#c9c9d0;margin:0 15.5px 0 14.5px;vertical-align:0.3em"></span>19 hours ago</div>
<svg style="left:2101px;top:1970.0px" width="14" height="20" viewBox="0 0 14 20"><path d="M3 2.5L10.5 10L3 17.5" fill="none" stroke="#c4c4cb" stroke-width="2.4" stroke-linecap="round" stroke-linejoin="round"/></svg>
<div class="t  h" style="left:2201px;top:390.87px;font-size:33px;color:#f4f4f6;letter-spacing:0.8px;">Entitlements</div>
<div class="r" style="left:2187px;top:448px;width:917px;height:215px;border:1.5px solid #2c2d33;border-radius:14px;"></div>
<svg style="left:2215px;top:479px" width="24" height="26" viewBox="0 0 24 26"><path d="M17.6 13.3c0-2.9 2.4-4.3 2.5-4.4-1.4-2-3.5-2.3-4.2-2.3-1.8-.2-3.5 1-4.4 1-.9 0-2.3-1-3.8-1-2 0-3.8 1.2-4.8 2.9-2.1 3.6-.5 8.9 1.5 11.8 1 1.4 2.2 3 3.7 3 1.5-.1 2-1 3.8-1s2.3 1 3.8 1c1.6 0 2.6-1.4 3.6-2.9 1.1-1.6 1.6-3.2 1.6-3.3-.1 0-3.3-1.2-3.3-4.8zM14.7 4.7c.8-1 1.4-2.3 1.2-3.7-1.2.1-2.6.8-3.5 1.8-.8.9-1.4 2.3-1.3 3.6 1.4.1 2.7-.7 3.6-1.7z" fill="#a3a3ab"/></svg>
<div class="t  " style="left:2255px;top:480.99px;font-size:26px;color:#f4f4f6;">Unlocks pro</div>
<div class="t  " style="left:2216px;top:520.26px;font-size:24.5px;color:#a9a9b1;"><span style="letter-spacing:-0.3px">etc.annual.7df.1999</span><span style="display:inline-block;width:5px;height:5px;border-radius:50%;background:#a9a9b1;margin:0 9.5px 0 9px;vertical-align:0.32em"></span><span style="letter-spacing:-0.5px">Yearly</span><span style="display:inline-block;width:5px;height:5px;border-radius:50%;background:#a9a9b1;margin:0 9.5px 0 9px;vertical-align:0.32em"></span><span style="letter-spacing:-1.1px">$19.99</span></div>
<div class="r" style="left:2971px;top:495px;width:103px;height:38px;background:#2e4644;border:1.5px solid #3a5250;border-radius:10px;"></div>
<svg style="left:2985px;top:505px" width="20" height="20" viewBox="0 0 20 20"><path d="M9.8 1.5a8 8 0 1 1-7.6 5.6" fill="none" stroke="#a5f3e4" stroke-width="1.9" stroke-linecap="round"/><path d="M4.2 3.2L9.6 8.6L10.6 10.6L8.6 9.6Z" fill="#a5f3e4" stroke="#a5f3e4" stroke-width="1.6" stroke-linejoin="round"/></svg>
<div class="t  " style="left:3016px;top:503.80px;font-size:21.5px;color:#a5f3e4;font-weight:700;">Trial</div>
<div class="t  " style="left:2216px;top:577.86px;font-size:24.5px;color:#b9b9c1;letter-spacing:-0.17px;">Trial converts in 6 days</div>
<div class="t" style="right:330px;top:577.86px;font-size:24.5px;color:#b9b9c1;transform:scaleX(0.875);transform-origin:100% 0">14%</div>
<div class="r" style="left:2215px;top:621px;width:859px;height:12px;background:#26272d;border-radius:6px;"></div>
<div class="r" style="left:2215px;top:621px;width:123px;height:12px;background:#8ff3e3;border-radius:6px 0 0 6px;"></div>
<div class="t  h" style="left:2200px;top:707.77px;font-size:33px;color:#f4f4f6;">Apple Search Ads</div>
<div class="r" style="left:2187px;top:764px;width:917px;height:920px;border:1.5px solid #2c2d33;border-radius:14px;"></div>
<div class="t  " style="left:2216.4px;top:784.41px;font-size:25.5px;color:#a8a8b0;letter-spacing:-0.15px;">Ad Group Id</div>
<div class="t m " style="left:2522px;top:786.00px;font-size:24.8px;color:#f4f4f6;transform:scaleY(1.18);transform-origin:0 76%;">1555801015</div>
<div class="r" style="left:2188px;top:830px;width:915px;height:1px;background:#2b2c32"></div>
<div class="t  " style="left:2216.4px;top:850.13px;font-size:25.5px;color:#a8a8b0;letter-spacing:-0.15px;">Ad Group Name</div>
<div class="t m " style="left:2522px;top:851.72px;font-size:24.8px;color:#f4f4f6;transform:scaleY(1.18);transform-origin:0 76%;">EFC Evergreen Ad Group</div>
<div class="r" style="left:2188px;top:895px;width:915px;height:1px;background:#2b2c32"></div>
<div class="t  " style="left:2216.4px;top:915.84px;font-size:25.5px;color:#a8a8b0;letter-spacing:-0.3px;">Ad Id</div>
<div class="t m " style="left:2522px;top:917.43px;font-size:24.8px;color:#f4f4f6;transform:scaleY(1.18);transform-origin:0 76%;">&#8211;1</div>
<div class="r" style="left:2188px;top:961px;width:915px;height:1px;background:#2b2c32"></div>
<div class="t  " style="left:2216.4px;top:981.56px;font-size:25.5px;color:#a8a8b0;letter-spacing:1.06px;">Attribution</div>
<div class="t m " style="left:2522px;top:983.14px;font-size:24.8px;color:#f4f4f6;transform:scaleY(1.18);transform-origin:0 76%;">Yes</div>
<div class="r" style="left:2188px;top:1027px;width:915px;height:1px;background:#2b2c32"></div>
<div class="t  " style="left:2216.4px;top:1047.27px;font-size:25.5px;color:#a8a8b0;letter-spacing:0.36px;">Bid Amount</div>
<div class="t m " style="left:2522px;top:1048.86px;font-size:24.8px;color:#f4f4f6;transform:scaleY(1.18);transform-origin:0 76%;">0.81</div>
<div class="r" style="left:2188px;top:1093px;width:915px;height:1px;background:#2b2c32"></div>
<div class="t  " style="left:2216.4px;top:1112.99px;font-size:25.5px;color:#a8a8b0;letter-spacing:0.17px;">Bid Currency</div>
<div class="t m " style="left:2522px;top:1114.57px;font-size:24.8px;color:#f4f4f6;transform:scaleY(1.18);transform-origin:0 76%;">USD</div>
<div class="r" style="left:2188px;top:1158px;width:915px;height:1px;background:#2b2c32"></div>
<div class="t  " style="left:2216.4px;top:1178.70px;font-size:25.5px;color:#a8a8b0;letter-spacing:0.06px;">Campaign Id</div>
<div class="t m " style="left:2522px;top:1180.29px;font-size:24.8px;color:#f4f4f6;transform:scaleY(1.18);transform-origin:0 76%;">1555850401</div>
<div class="r" style="left:2188px;top:1224px;width:915px;height:1px;background:#2b2c32"></div>
<div class="t  " style="left:2216.4px;top:1244.41px;font-size:25.5px;color:#a8a8b0;letter-spacing:-0.07px;">Campaign Name</div>
<div class="t m " style="left:2522px;top:1246.00px;font-size:24.8px;color:#f4f4f6;transform:scaleY(1.18);transform-origin:0 76%;">EFC Evergreen</div>
<div class="r" style="left:2188px;top:1290px;width:915px;height:1px;background:#2b2c32"></div>
<div class="t  " style="left:2216.4px;top:1310.13px;font-size:25.5px;color:#a8a8b0;letter-spacing:0.03px;">Conversion Type</div>
<div class="t m " style="left:2522px;top:1311.72px;font-size:24.8px;color:#f4f4f6;transform:scaleY(1.18);transform-origin:0 76%;">Download</div>
<div class="r" style="left:2188px;top:1355px;width:915px;height:1px;background:#2b2c32"></div>
<div class="t  " style="left:2216.4px;top:1375.84px;font-size:25.5px;color:#a8a8b0;">Country Or Region</div>
<div class="t m " style="left:2522px;top:1377.43px;font-size:24.8px;color:#f4f4f6;transform:scaleY(1.18);transform-origin:0 76%;">US</div>
<div class="r" style="left:2188px;top:1421px;width:915px;height:1px;background:#2b2c32"></div>
<div class="t  " style="left:2216.4px;top:1441.56px;font-size:25.5px;color:#a8a8b0;">Keyword Id</div>
<div class="t m " style="left:2522px;top:1443.14px;font-size:24.8px;color:#f4f4f6;transform:scaleY(1.18);transform-origin:0 76%;">1796566603</div>
<div class="r" style="left:2188px;top:1487px;width:915px;height:1px;background:#2b2c32"></div>
<div class="t  " style="left:2216.4px;top:1507.27px;font-size:25.5px;color:#a8a8b0;letter-spacing:-0.1px;">Keyword Name</div>
<div class="t m " style="left:2522px;top:1508.86px;font-size:24.8px;color:#f4f4f6;transform:scaleY(1.18);transform-origin:0 76%;">build lineup</div>
<div class="r" style="left:2188px;top:1553px;width:915px;height:1px;background:#2b2c32"></div>
<div class="t  " style="left:2216.4px;top:1572.99px;font-size:25.5px;color:#a8a8b0;letter-spacing:0.16px;">Match Type</div>
<div class="t m " style="left:2522px;top:1574.57px;font-size:24.8px;color:#f4f4f6;transform:scaleY(1.18);transform-origin:0 76%;">EXACT</div>
<div class="r" style="left:2188px;top:1618px;width:915px;height:1px;background:#2b2c32"></div>
<div class="t  " style="left:2216.4px;top:1638.70px;font-size:25.5px;color:#a8a8b0;letter-spacing:-0.63px;">Org Id</div>
<div class="t m " style="left:2522px;top:1640.29px;font-size:24.8px;color:#f4f4f6;transform:scaleY(1.18);transform-origin:0 76%;">7937960</div>
<div class="t  h" style="left:2200.5px;top:1730.07px;font-size:33px;color:#f4f4f6;">Aliases</div>
<div class="r" style="left:2186px;top:1787px;width:918px;height:94px;border:1.5px solid #2c2d33;border-radius:14px;"></div>
<div class="t" style="left:2186px;width:918px;text-align:center;top:1821.99px;font-size:26px;color:#b9b9c1">No aliases found</div>
<div class="t  h" style="left:2200px;top:1930.07px;font-size:33px;color:#f4f4f6;">User</div>
<div class="r" style="left:2741px;top:1918px;width:363px;height:56px;background:#212228;border:1.5px solid #32333a;border-radius:12px;"></div>
<div class="t  " style="left:2763px;top:1934.26px;font-size:24.5px;color:#8a8a93;">Search user attributes...</div>
<div class="r" style="left:3050px;top:1931px;width:2px;height:30px;background:#2c2d33"></div>
<svg style="left:3067px;top:1934px" width="22" height="22" viewBox="0 0 22 22"><circle cx="10" cy="10" r="8" fill="none" stroke="#b9b9c1" stroke-width="2.6"/><path d="M16 16l5 5" stroke="#b9b9c1" stroke-width="2.6" stroke-linecap="round"/></svg>
<div class="r" style="left:3313px;top:1879px;width:81px;height:81px;border-radius:50%;background:#8ff3e3;"></div>
<svg style="left:3332px;top:1897px" width="44" height="50" viewBox="0 0 44 50"><circle cx="22" cy="21.4" r="20" fill="#050505"/><path d="M25 38 L31.5 46.8 L31 33 Z" fill="#050505"/><path d="M12.2 10.2h8.5M7.1 18h13.6M7.5 25.9h13.2" stroke="#8ff3e3" stroke-width="3.8" stroke-linecap="round"/></svg>
</body></html>
